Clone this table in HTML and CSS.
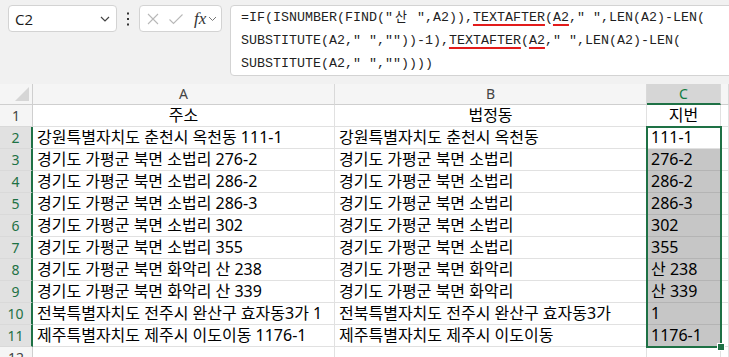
FILE: index.html
```html
<!DOCTYPE html>
<html lang="ko">
<head>
<meta charset="utf-8">
<link rel="stylesheet" href="styles.css">
</head>
<body>
<div class="toolbar">
  <div class="namebox">
    <span class="ref">C2</span>
    <svg class="chev" width="10" height="6" viewBox="0 0 10 6"><path d="M1 1 L5 5 L9 1" fill="none" stroke="#444" stroke-width="1.2"/></svg>
  </div>
  <div class="dots">
    <svg width="4" height="14" viewBox="0 0 4 14"><rect x="1" y="0.5" width="2" height="2" fill="#333"/><rect x="1" y="6" width="2" height="2" fill="#333"/><rect x="1" y="11.5" width="2" height="2" fill="#333"/></svg>
  </div>
  <div class="fxbox">
    <svg class="ico" width="14" height="14" viewBox="0 0 14 14"><path d="M2 2 L12 12 M12 2 L2 12" fill="none" stroke="#b8b8b8" stroke-width="1.1"/></svg>
    <svg class="ico" width="16" height="14" viewBox="0 0 16 14"><path d="M1.5 7.5 L5.5 11.5 L14.5 2.5" fill="none" stroke="#b8b8b8" stroke-width="1.1"/></svg>
    <span class="fx">fx</span>
    <svg class="chev2" width="9" height="6" viewBox="0 0 9 6"><path d="M1 1 L4.5 4.5 L8 1" fill="none" stroke="#777" stroke-width="1"/></svg>
  </div>
  <div class="formula"><div class="fl">=IF(ISNUMBER(FIND("<span class="wide">산</span> ",A2)),<span class="err">TEXTAFTER</span>(<span class="err">A2</span>," ",LEN(A2)-LEN(</div><div class="fl">SUBSTITUTE(A2," ",""))-1),<span class="err">TEXTAFTER</span>(<span class="err">A2</span>," ",LEN(A2)-LEN(</div><div class="fl">SUBSTITUTE(A2," ",""))))</div></div>
</div>
<div class="sheet">
  <div class="corner"><span class="tri"></span></div>
  <div class="h">A</div><div class="h">B</div><div class="h sel">C</div><div class="h"></div>

  <div class="r">1</div><div class="c ctr">주소</div><div class="c ctr">법정동</div><div class="c ctr">지번</div><div class="c"></div>

  <div class="r sel">2</div><div class="c">강원특별자치도 춘천시 옥천동 111-1</div><div class="c">강원특별자치도 춘천시 옥천동</div><div class="c">111-1</div><div class="c"></div>
  <div class="r sel">3</div><div class="c">경기도 가평군 북면 소법리 276-2</div><div class="c">경기도 가평군 북면 소법리</div><div class="c hl">276-2</div><div class="c"></div>
  <div class="r sel">4</div><div class="c">경기도 가평군 북면 소법리 286-2</div><div class="c">경기도 가평군 북면 소법리</div><div class="c hl">286-2</div><div class="c"></div>
  <div class="r sel">5</div><div class="c">경기도 가평군 북면 소법리 286-3</div><div class="c">경기도 가평군 북면 소법리</div><div class="c hl">286-3</div><div class="c"></div>
  <div class="r sel">6</div><div class="c">경기도 가평군 북면 소법리 302</div><div class="c">경기도 가평군 북면 소법리</div><div class="c hl">302</div><div class="c"></div>
  <div class="r sel">7</div><div class="c">경기도 가평군 북면 소법리 355</div><div class="c">경기도 가평군 북면 소법리</div><div class="c hl">355</div><div class="c"></div>
  <div class="r sel">8</div><div class="c">경기도 가평군 북면 화악리 산 238</div><div class="c">경기도 가평군 북면 화악리</div><div class="c hl">산 238</div><div class="c"></div>
  <div class="r sel">9</div><div class="c">경기도 가평군 북면 화악리 산 339</div><div class="c">경기도 가평군 북면 화악리</div><div class="c hl">산 339</div><div class="c"></div>
  <div class="r sel">10</div><div class="c">전북특별자치도 전주시 완산구 효자동3가 1</div><div class="c">전북특별자치도 전주시 완산구 효자동3가</div><div class="c hl">1</div><div class="c"></div>
  <div class="r sel">11</div><div class="c">제주특별자치도 제주시 이도이동 1176-1</div><div class="c">제주특별자치도 제주시 이도이동</div><div class="c hl">1176-1</div><div class="c"></div>
  <div class="r">12</div><div class="c"></div><div class="c"></div><div class="c"></div><div class="c"></div>

  <div class="selection"><span class="handle"></span></div>
</div>
</body>
</html>
```
FILE: styles.css
```css
html, body {
  margin: 0;
  padding: 0;
}
body {
  width: 729px;
  height: 357px;
  overflow: hidden;
  background: #f1f1f1;
  font-family: "Noto Sans", sans-serif;
}

/* ---------- toolbar ---------- */
.toolbar {
  display: flex;
  align-items: flex-start;
  height: 84px;
  padding: 5px 0 0 8px;
  box-sizing: border-box;
}
.namebox {
  width: 109px;
  height: 27px;
  box-sizing: border-box;
  border: 1px solid #d3d3d3;
  border-radius: 4px;
  background: #fff;
  display: flex;
  align-items: center;
  justify-content: space-between;
  padding: 0 6px 0 6px;
  font: 15px "Open Sans", sans-serif;
  color: #1b1b1b;
}
.dots {
  width: 22px;
  height: 27px;
  display: flex;
  align-items: center;
  justify-content: center;
}
.fxbox {
  width: 83px;
  height: 27px;
  box-sizing: border-box;
  border: 1px solid #d3d3d3;
  border-radius: 4px;
  background: #fff;
  display: flex;
  align-items: center;
  padding: 0 0 0 6px;
  gap: 8px;
}
.fx {
  font: italic 17px "Liberation Serif", serif;
  color: #333;
  margin-left: 2px;
  margin-right: -6px;
  line-height: 20px;
}
.formula {
  flex: 1;
  height: 71px;
  margin-left: 8px;
  margin-right: -8px;
  box-sizing: border-box;
  border: 1px solid #d3d3d3;
  border-radius: 4px;
  background: #fff;
  padding: 0 0 0 10px;
  font: 13.33px "Liberation Mono", monospace;
  line-height: 23px;
  color: #1f1f1f;
}
.fl {
  white-space: pre;
  height: 23px;
}
.wide {
  display: inline-block;
  width: 16px;
  text-align: center;
  font-family: "Noto Sans CJK KR", sans-serif;
  font-size: 13px;
  line-height: 16px;
}
.err {
  text-decoration: underline;
  text-decoration-color: #e21b1b;
  text-decoration-thickness: 2px;
  text-underline-offset: 3px;
}

/* ---------- sheet ---------- */
.sheet {
  position: relative;
  display: grid;
  grid-template-columns: 33px 302px 312px 74px 1fr;
  grid-template-rows: 21px repeat(12, 22px);
  background: #fff;
}
.corner {
  background: #f5f5f5;
  border-right: 1px solid #cfcfcf;
  border-bottom: 1px solid #cfcfcf;
  box-sizing: border-box;
  display: flex;
  justify-content: flex-end;
  align-items: flex-end;
  padding: 0 3px 3px 0;
}
.tri {
  width: 14px;
  height: 14px;
  background: #d6d6d6;
  clip-path: polygon(100% 0, 100% 100%, 0 100%);
}
.h {
  background: #f5f5f5;
  border-right: 1px solid #d9d9d9;
  border-bottom: 1px solid #cfcfcf;
  box-sizing: border-box;
  text-align: center;
  font: 14px "Noto Sans", sans-serif;
  line-height: 20px;
  color: #444;
}
.h.sel {
  background: #d6d6d6;
  color: #107c41;
  border-bottom: 2px solid #1e7145;
}
.r {
  background: #f5f5f5;
  border-right: 1px solid #cfcfcf;
  border-bottom: 1px solid #d9d9d9;
  box-sizing: border-box;
  text-align: center;
  font: 14px "Noto Sans", sans-serif;
  line-height: 21px;
  color: #444;
}
.r.sel {
  background: #e1e1e1;
  color: #1e7145;
  border-right: 2px solid #1e7145;
}
.c {
  border-right: 1px solid #e1e1e1;
  border-bottom: 1px solid #e1e1e1;
  box-sizing: border-box;
  padding-left: 4px;
  font: 16px "Noto Sans", "Noto Sans CJK KR", sans-serif;
  line-height: 21px;
  color: #000;
  white-space: nowrap;
  overflow: hidden;
}
.c.ctr {
  text-align: center;
  padding-left: 0;
}
.c.hl {
  background: #c6c6c6;
  border-bottom-color: #b4b4b4;
}
.selection {
  position: absolute;
  left: 646px;
  top: 42px;
  width: 76px;
  height: 222px;
  box-sizing: border-box;
  border: 2px solid #1e7145;
  pointer-events: none;
}
.handle {
  position: absolute;
  right: -5px;
  bottom: -5px;
  width: 6px;
  height: 6px;
  background: #1e7145;
  border: 1px solid #fff;
}
```
